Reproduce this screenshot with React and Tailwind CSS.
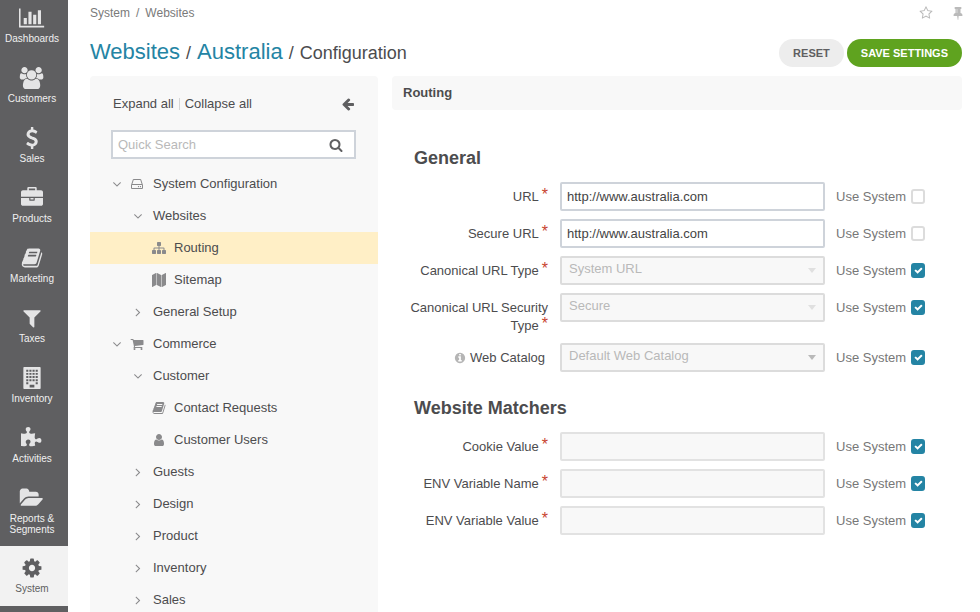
import React from "react";

const ICONS = {
  chart: [2048, "M640 896v512h-256v-512h256zm384-512v1024h-256v-1024h256zm1024 1152v128h-2048v-1536h128v1408h1920zm-640-896v768h-256v-768h256zm384-384v1152h-256v-1152h256z"],
  users: [2048, "M657 896q-162 5-265 128h-134q-82 0-138-40.5t-56-118.5q0-353 124-353 6 0 43.5 21t97.5 42.5 119 21.5q67 0 133-23-5 37-5 66 0 139 81 256zm1071 637q0 120-73 189.5t-194 69.5h-874q-121 0-194-69.5t-73-189.5q0-53 3.5-103.5t14-109 26.5-108.5 43-97.5 62-81 85.5-53.5 111.5-20q10 0 43 21.5t73 48 107 48 135 21.5 135-21.5 107-48 73-48 43-21.5q61 0 111.5 20t85.5 53.5 62 81 43 97.5 26.5 108.5 14 109 3.5 103.5zm-1024-1277q0 106-75 181t-181 75-181-75-75-181 75-181 181-75 181 75 75 181zm704 384q0 159-112.5 271.5t-271.5 112.5-271.5-112.5-112.5-271.5 112.5-271.5 271.5-112.5 271.5 112.5 112.5 271.5zm576 225q0 78-56 118.5t-138 40.5h-134q-103-123-265-128 81-117 81-256 0-29-5-66 66 23 133 23 59 0 119-21.5t97.5-42.5 43.5-21q124 0 124 353zm-128-609q0 106-75 181t-181 75-181-75-75-181 75-181 181-75 181 75 75 181z"],
  dollar: [1792, "M1362 1185q0 153-99.5 263.5t-258.5 136.5v175q0 14-9 23t-23 9h-135q-13 0-22.5-9.5t-9.5-22.5v-175q-66-9-127.5-31t-101.5-44.5-74-48-46.5-37.5-17.5-18q-17-21-2-41l103-135q7-10 23-12 15-2 24 9l2 2q113 99 243 125 37 8 74 8 81 0 142.5-43t61.5-122q0-28-15-53t-33.5-42-58.5-37.5-66-32-80-32.5q-39-16-61.5-25t-61.5-26.5-62.5-31-56.5-35.5-53.5-42.5-43.5-49-35.5-58-21-66.5-8.5-78q0-138 98-242t255-134v-180q0-13 9.5-22.5t22.5-9.5h135q14 0 23 9t9 23v176q57 6 110.5 23t87 33.5 63.5 37.5 39 29 15 14q17 18 5 38l-81 146q-8 15-23 16-14 3-27-7-3-3-14.5-12t-39-26.5-58.5-32-74.5-26-85.5-11.5q-95 0-155 43t-60 111q0 26 8.5 48t29.5 41.5 39.5 33 56 31 60.5 27 70 27.5q53 20 81 31.5t76 35 75.5 42.5 62 50 53 63.5 31.5 76.5 13 94z"],
  briefcase: [1792, "M640 256h512v-128h-512v128zm1152 640v480q0 66-47 113t-113 47h-1472q-66 0-113-47t-47-113v-480h672v160q0 26 19 45t45 19h320q26 0 45-19t19-45v-160h672zm-768 0v128h-256v-128h256zm768-480v384h-1792v-384q0-66 47-113t113-47h352v-160q0-40 28-68t68-28h576q40 0 68 28t28 68v160h352q66 0 113 47t47 113z"],
  book: [1792, "M1703 478q40 57 18 129l-275 906q-19 64-76.5 107.5t-122.5 43.5h-923q-77 0-148.5-53.5t-99.5-131.5q-24-67-2-127 0-4 3-27t4-37q1-8-3-21.5t-3-19.5q2-11 8-21t16.5-23.5 16.5-23.5q23-38 45-91.5t30-91.5q3-10 .5-30t-.5-28q3-11 17-28t17-23q21-36 42-92t25-90q1-9-2.5-32t.5-28q4-13 22-30.5t22-22.5q19-26 42.5-84.5t27.5-96.5q1-8-3-25.5t-2-26.5q2-8 9-18t18-23 17-21q8-12 16.5-30.5t15-35 16-36 19.5-32 26.5-23.5 36-11.5 47.5 5.5l-1 3q38-9 51-9h761q74 0 114 56t18 130l-274 906q-36 119-71.5 153.5t-128.5 34.5h-869q-27 0-38 15-11 16-1 43 24 70 144 70h923q29 0 56-15.5t35-41.5l300-987q7-22 5-57 38 15 59 43zm-1064 2q-4 13 2 22.5t20 9.5h608q13 0 25.5-9.5t16.5-22.5l21-64q4-13-2-22.5t-20-9.5h-608q-13 0-25.5 9.5t-16.5 22.5zm-83 256q-4 13 2 22.5t20 9.5h608q13 0 25.5-9.5t16.5-22.5l21-64q4-13-2-22.5t-20-9.5h-608q-13 0-25.5 9.5t-16.5 22.5z"],
  filter: [1792, "M1595 295q17 41-14 70l-493 493v742q0 42-39 59-13 5-25 5-27 0-45-19l-256-256q-19-19-19-45v-486l-493-493q-31-29-14-70 17-39 59-39h1280q42 0 59 39z"],
  building: [1792, "M192 64q0-64 64-64h1280q64 0 64 64v1664q0 64-64 64h-1280q-64 0-64-64zM427 224h170v160h-170zM683 224h170v160h-170zM939 224h170v160h-170zM1195 224h170v160h-170zM427 480h170v160h-170zM683 480h170v160h-170zM939 480h170v160h-170zM1195 480h170v160h-170zM427 736h170v160h-170zM683 736h170v160h-170zM939 736h170v160h-170zM1195 736h170v160h-170zM427 992h170v160h-170zM683 992h170v160h-170zM939 992h170v160h-170zM1195 992h170v160h-170zM427 1248h170v160h-170zM1195 1248h170v160h-170zM704 1440h384v224h-384z"],
  puzzle: [1792, "M1664 1098q0 81-44.5 135t-123.5 54q-41 0-77.5-17.5t-59-38-56.5-38-71-17.5q-110 0-110 124 0 39 16 115t15 115v5q-22 0-33 1-34 3-97.5 11.5t-115.5 13.5-98 5q-61 0-103-26.5t-42-83.5q0-37 17.5-71t38-56.5 38-59 17.5-77.5q0-79-54-123.5t-135-44.5q-84 0-143 45.5t-59 127.5q0 43 15 83t33.5 64.5 33.5 53 15 50.5q0 45-46 89-37 35-117 35-95 0-245-24-9-2-27.5-4t-27.5-4l-13-2q-1 0-3-1-2 0-2-1v-1024q2 1 17.5 3.5t34 5 21.5 3.5q150 24 245 24 80 0 117-35 46-44 46-89 0-22-15-50.5t-33.5-53-33.5-64.5-15-83q0-82 59-127.5t144-45.5q80 0 134 44.5t54 123.5q0 41-17.5 77.5t-38 59-38 56.5-17.5 71q0 57 42 83.5t103 26.5q64 0 180-15t163-17v2q-1 2-3.5 17.5t-5 34-3.5 21.5q-24 150-24 245 0 80 35 117 44 46 89 46 22 0 50.5-15t53-33.5 64.5-33.5 83-15q82 0 127.5 59t45.5 143z"],
  folder: [2048, "M1943 952q0 31-31 66l-336 396q-43 51-120.5 86.5t-143.5 35.5h-1088q-34 0-60.5-13t-26.5-43q0-31 31-66l336-396q43-51 120.5-86.5t143.5-35.5h1088q34 0 60.5 13t26.5 43zm-343-344v160h-832q-94 0-197 47.5t-164 119.5l-337 396-5 6q0-4-.5-12.5t-.5-12.5v-960q0-92 66-158t158-66h320q92 0 158 66t66 158v32h544q92 0 158 66t66 158z"],
  cog: [1792, "M1152 896q0-106-75-181t-181-75-181 75-75 181 75 181 181 75 181-75 75-181zm512-109v222q0 12-8 23t-20 13l-185 28q-19 54-39 91 35 50 107 138 10 12 10 25t-9 23q-27 37-99 108t-94 71q-12 0-26-9l-138-108q-44 23-91 38-16 136-29 186-7 28-36 28h-222q-14 0-24.5-8.5t-11.5-21.5l-28-184q-49-16-90-37l-141 107q-10 9-25 9-14 0-25-11-126-114-165-168-7-10-7-23 0-12 8-23 15-21 51-66.5t54-70.5q-27-50-41-99l-183-27q-13-2-21-12.5t-8-23.5v-222q0-12 8-23t19-13l186-28q14-46 39-92-40-57-107-138-10-12-10-24 0-10 9-23 26-36 98.5-107.5t94.5-71.5q13 0 26 10l138 107q44-23 91-38 16-136 29-186 7-28 36-28h222q14 0 24.5 8.5t11.5 21.5l28 184q49 16 90 37l142-107q9-9 24-9 13 0 25 10 129 119 165 170 7 8 7 22 0 12-8 23-15 21-51 66.5t-54 70.5q26 50 41 98l183 28q13 2 21 12.5t8 23.5z"],
  star: [1792, "M1201 1004l306-297-422-62-189-382-189 382-422 62 306 297-73 421 378-199 377 199zm527-357q0 22-26 48l-363 354 86 500q1 7 1 20 0 50-41 50-19 0-40-12l-449-236-449 236q-22 12-40 12-21 0-31.5-14.5t-10.5-35.5q0-6 2-20l86-500-364-354q-25-27-25-48 0-37 56-46l502-73 225-455q19-41 49-41t49 41l225 455 502 73q56 9 56 46z"],
  pin: [1792, "M800 864v-448q0-14-9-23t-23-9-23 9-9 23v448q0 14 9 23t23 9 23-9 9-23zm672 352q0 26-19 45t-45 19h-429l-51 483q-2 12-10.5 20.5t-20.5 8.5h-1q-27 0-32-27l-76-485h-404q-26 0-45-19t-19-45q0-123 78.5-221.5t177.5-98.5v-512q-52 0-90-38t-38-90 38-90 90-38h640q52 0 90 38t38 90-38 90-90 38v512q99 0 177.5 98.5t78.5 221.5z"],
  arrowLeft: [1792, "M1664 896v128q0 53-32.5 90.5t-84.5 37.5h-704l293 294q38 36 38 90t-38 90l-75 76q-37 37-90 37-52 0-91-37l-651-652q-37-37-37-90 0-52 37-91l651-650q38-38 91-38 52 0 90 38l75 74q38 38 38 91t-38 91l-293 293h704q52 0 84.5 37.5t32.5 90.5z"],
  search: [1792, "M1216 832q0-185-131.5-316.5t-316.5-131.5-316.5 131.5-131.5 316.5 131.5 316.5 316.5 131.5 316.5-131.5 131.5-316.5zm512 832q0 52-38 90t-90 38q-54 0-90-38l-343-342q-179 124-399 124-143 0-273.5-55.5t-225-150-150-225-55.5-273.5 55.5-273.5 150-225 225-150 273.5-55.5 273.5 55.5 225 150 150 225 55.5 273.5q0 220-124 399l343 343q37 37 37 90z"],
  sitemap: [1792, "M1792 1248v320q0 40-28 68t-68 28h-320q-40 0-68-28t-28-68v-320q0-40 28-68t68-28h96v-192h-512v192h96q40 0 68 28t28 68v320q0 40-28 68t-68 28h-320q-40 0-68-28t-28-68v-320q0-40 28-68t68-28h96v-192h-512v192h96q40 0 68 28t28 68v320q0 40-28 68t-68 28h-320q-40 0-68-28t-28-68v-320q0-40 28-68t68-28h96v-192q0-52 38-90t90-38h512v-192h-96q-40 0-68-28t-28-68v-320q0-40 28-68t68-28h320q40 0 68 28t28 68v320q0 40-28 68t-68 28h-96v192h512q52 0 90 38t38 90v192h96q40 0 68 28t28 68z"],
  map: [1792, "M512 0q13 0 22.5 9.5t9.5 22.5v1472q0 20-17 28l-480 256q-7 4-15 4-13 0-22.5-9.5t-9.5-22.5v-1472q0-20 17-28l480-256q7-4 15-4zm1248 0q13 0 22.5 9.5t9.5 22.5v1472q0 20-17 28l-480 256q-7 4-15 4-13 0-22.5-9.5t-9.5-22.5v-1472q0-20 17-28l480-256q7-4 15-4zm-1120 0q8 0 14 3l512 256q18 10 18 29v1472q0 13-9.5 22.5t-22.5 9.5q-8 0-14-3l-512-256q-18-10-18-29v-1472q0-13 9.5-22.5t22.5-9.5z"],
  cart: [1792, "M704 1536q0 52-38 90t-90 38-90-38-38-90 38-90 90-38 90 38 38 90zm896 0q0 52-38 90t-90 38-90-38-38-90 38-90 90-38 90 38 38 90zm128-1088v512q0 24-16.5 42.5t-40.5 21.5l-1044 122q13 60 13 70 0 16-24 64h920q26 0 45 19t19 45-19 45-45 19h-1024q-26 0-45-19t-19-45q0-11 8-31.5t16-36 21.5-40 15.5-29.5l-177-823h-204q-26 0-45-19t-19-45 19-45 45-19h256q16 0 28.5 6.5t19.5 15.5 13 24.5 8 26 5.5 29.5 4.5 26h1201q26 0 45 19t19 45z"],
  user: [1792, "M1536 1399q0 109-62.5 187t-150.5 78h-854q-88 0-150.5-78t-62.5-187q0-85 8.5-160.5t31.5-152 58.5-131 94-89 134.5-34.5q131 128 313 128t313-128q76 0 134.5 34.5t94 89 58.5 131 31.5 152 8.5 160.5zm-256-887q0 159-112.5 271.5t-271.5 112.5-271.5-112.5-112.5-271.5 112.5-271.5 271.5-112.5 271.5 112.5 112.5 271.5z"],
  info: [1792, "M1152 1376v-160q0-14-9-23t-23-9h-96v-512q0-14-9-23t-23-9h-320q-14 0-23 9t-9 23v160q0 14 9 23t23 9h96v320h-96q-14 0-23 9t-9 23v160q0 14 9 23t23 9h448q14 0 23-9t9-23zm-128-896v-160q0-14-9-23t-23-9h-192q-14 0-23 9t-9 23v160q0 14 9 23t23 9h192q14 0 23-9t9-23zm640 416q0 209-103 385.5t-279.5 279.5-385.5 103-385.5-103-279.5-279.5-103-385.5 103-385.5 279.5-279.5 385.5-103 385.5 103 279.5 279.5 103 385.5z"],
  angleDown: [1792, "M1395 736q0 13-10 23l-466 466q-10 10-23 10t-23-10l-466-466q-10-10-10-23t10-23l50-50q10-10 23-10t23 10l393 393 393-393q10-10 23-10t23 10l50 50q10 10 10 23z"],
  angleRight: [1792, "M1171 960q0 13-10 23l-466 466q-10 10-23 10t-23-10l-50-50q-10-10-10-23t10-23l393-393-393-393q-10-10-10-23t10-23l50-50q10-10 23-10t23 10l466 466q10 10 10 23z"],
  hdd: [1792, "M1168 1216q0 33-23.5 56.5t-56.5 23.5-56.5-23.5-23.5-56.5 23.5-56.5 56.5-23.5 56.5 23.5 23.5 56.5zm256 0q0 33-23.5 56.5t-56.5 23.5-56.5-23.5-23.5-56.5 23.5-56.5 56.5-23.5 56.5 23.5 23.5 56.5zm112 160v-320q0-13-9.5-22.5t-22.5-9.5h-1216q-13 0-22.5 9.5t-9.5 22.5v320q0 13 9.5 22.5t22.5 9.5h1216q13 0 22.5-9.5t9.5-22.5zm-1230-480h1180l-157-482q-4-13-16-21.5t-26-8.5h-782q-14 0-26 8.5t-16 21.5zm1358 160v320q0 66-47 113t-113 47h-1216q-66 0-113-47t-47-113v-320q0-25 16-75l197-606q17-53 63-86t101-33h782q55 0 101 33t63 86l197 606q16 50 16 75z"],
  check: [1792, "M1671 566q0 40-28 68l-724 724-136 136q-28 28-68 28t-68-28l-136-136-362-362q-28-28-28-68t28-68l136-136q28-28 68-28t68 28l294 295 656-657q28-28 68-28t68 28l136 136q28 28 28 68z"],
};

function Icon({ name, className }) {
  const [width, d] = ICONS[name];
  return (
    <svg viewBox={`0 0 ${width} 1792`} className={className} fill="currentColor" fillRule={name === "building" ? "evenodd" : "nonzero"} aria-hidden="true">
      <path d={d} />
    </svg>
  );
}

const MENU = [
  ["chart", "Dashboards"],
  ["users", "Customers"],
  ["dollar", "Sales"],
  ["briefcase", "Products"],
  ["book", "Marketing"],
  ["filter", "Taxes"],
  ["building", "Inventory"],
  ["puzzle", "Activities"],
  ["folder", "Reports & Segments"],
  ["cog", "System"],
];

const TREE = [
  { level: 0, open: true, icon: "hdd", text: "System Configuration" },
  { level: 1, open: true, text: "Websites" },
  { level: 2, icon: "sitemap", text: "Routing", active: true },
  { level: 2, icon: "map", text: "Sitemap" },
  { level: 1, open: false, text: "General Setup" },
  { level: 0, open: true, icon: "cart", text: "Commerce" },
  { level: 1, open: true, text: "Customer" },
  { level: 2, icon: "book", text: "Contact Requests" },
  { level: 2, icon: "user", text: "Customer Users" },
  { level: 1, open: false, text: "Guests" },
  { level: 1, open: false, text: "Design" },
  { level: 1, open: false, text: "Product" },
  { level: 1, open: false, text: "Inventory" },
  { level: 1, open: false, text: "Sales" },
];

const INDENT = ["pl-5", "pl-[41px]", "pl-[62px]"];

const GENERAL = [
  { id: "url", label: "URL", required: true, value: "http://www.australia.com" },
  { id: "secure-url", label: "Secure URL", required: true, value: "http://www.australia.com" },
  { id: "canonical-type", label: "Canonical URL Type", required: true, select: "System URL", system: true },
  { id: "canonical-security", label: "Canonical URL Security Type", required: true, select: "Secure", system: true },
  { id: "web-catalog", label: "Web Catalog", hint: true, select: "Default Web Catalog", strongCaret: true, system: true },
];

const MATCHERS = [
  { id: "cookie", label: "Cookie Value", required: true, value: "", system: true },
  { id: "env-name", label: "ENV Variable Name", required: true, value: "", system: true },
  { id: "env-value", label: "ENV Variable Value", required: true, value: "", system: true },
];

function Sidebar() {
  return (
    <nav className="-mt-1 w-[68px] shrink-0 bg-[#5f5f61]">
      {MENU.map(([icon, text]) => {
        const active = text === "System";
        return (
          <a
            key={text}
            href="#"
            className={`flex min-h-[60px] flex-col items-center gap-1 pt-[11px] pr-1 pb-[11px] text-center text-[10px] leading-[11px] ${
              active ? "bg-[#f2f2f2] text-[#5f5f61]" : "text-[#f0f0f0]"
            }`}
          >
            <Icon name={icon} className={`h-[22px] ${active ? "" : "text-[#e4e4e5]"}`} />
            <span className={icon === "folder" ? "w-12" : ""}>{text}</span>
          </a>
        );
      })}
    </nav>
  );
}

function TreePanel() {
  return (
    <aside className="w-[288px] shrink-0 overflow-hidden rounded-t bg-[#f8f8f8]">
      <div className="flex items-center pt-[19px] pr-[23px] pl-[23px]">
        <button type="button">Expand all</button>
        <span className="mx-[5px] h-3 w-px bg-[#d5d5d5]" />
        <button type="button">Collapse all</button>
        <button type="button" aria-label="Collapse panel" className="ml-auto text-[#5f5f61]">
          <Icon name="arrowLeft" className="size-[14px]" />
        </button>
      </div>
      <div className="mt-[17px] mr-[22px] mb-[9px] ml-[21px] flex h-[29px] items-center border-2 border-[#ced3da] bg-white pr-[11px]">
        <input
          type="text"
          aria-label="Quick Search"
          placeholder="Quick Search"
          className="min-w-0 flex-1 bg-transparent pl-[5px] outline-none placeholder:text-[#b9b9b9]"
        />
        <button type="button" aria-label="Search">
          <Icon name="search" className="size-[14px] text-[#5f5f61]" />
        </button>
      </div>
      <ul>
        {TREE.map((node) => (
          <li key={node.text}>
            <a href="#" className={`flex h-8 items-center ${INDENT[node.level]} ${node.active ? "bg-[#ffefc6]" : ""}`}>
              {node.open !== undefined && (
                <Icon name={node.open ? "angleDown" : "angleRight"} className={`size-[14px] text-[#8a8a8c] ${node.icon ? "mr-[6px]" : "mr-2"}`} />
              )}
              {node.icon && <Icon name={node.icon} className={`size-[14px] text-[#8a8a8c] ${node.level === 2 ? "mr-2" : "mr-[9px]"}`} />}
              {node.text}
            </a>
          </li>
        ))}
      </ul>
    </aside>
  );
}

function Field({ field }) {
  const { id, label, required, hint, value, select, strongCaret, system } = field;
  return (
    <div className="flex items-start">
      <label htmlFor={id} className="w-[140px] shrink-0 pt-[6px] text-right leading-[18px]">
        {hint && <Icon name="info" className="mr-1 inline-block size-3 align-[-2px] text-[#b5b5b5]" />}
        <span className={required ? "" : "pr-[3px]"}>{label}</span>
        {required && <span className="relative -top-px pl-[3px] text-base leading-none text-[#c8452f]">*</span>}
      </label>
      <div className="relative ml-3 w-[265px] shrink-0">
        {select ? (
          <>
            <select
              id={id}
              disabled
              className="block h-[29px] w-full appearance-none rounded-[2px] border-2 border-[#dcdcdc] bg-[#f8f8f8] pr-6 pb-1 pl-[7px] text-[#b9b9b9] opacity-100"
            >
              <option>{select}</option>
            </select>
            <span
              className={`pointer-events-none absolute top-3 right-[9px] border-x-4 border-t-5 border-x-transparent ${
                strongCaret ? "border-t-[#b9b9b9]" : "border-t-[#e0e0e0]"
              }`}
            />
          </>
        ) : (
          <input
            id={id}
            type="text"
            defaultValue={value}
            disabled={system}
            className="block h-[29px] w-full rounded-[2px] border-2 border-[#ced3da] bg-white px-[5px] text-[#444] outline-none disabled:border-[#e2e2e2] disabled:bg-[#f8f8f8]"
          />
        )}
      </div>
      <label className="ml-[11px] flex h-[29px] items-center text-[#777]">
        <span className="w-[75px] whitespace-nowrap">Use System</span>
        <span className="relative flex">
          <input
            type="checkbox"
            defaultChecked={system}
            className="peer h-[15px] w-[14px] appearance-none rounded-[3px] border-2 border-[#dcdcdc] bg-white checked:border-[#2484a4] checked:bg-[#2484a4]"
          />
          <Icon name="check" className="pointer-events-none absolute inset-0 m-auto hidden size-[9px] text-white peer-checked:block" />
        </span>
      </label>
    </div>
  );
}

function Section({ title, fields }) {
  return (
    <section>
      <h2 className="pl-[6px] text-lg leading-6 font-bold text-[#4c4c4e]">{title}</h2>
      <div className="mt-3 flex flex-col gap-2">
        {fields.map((field) => (
          <Field key={field.id} field={field} />
        ))}
      </div>
    </section>
  );
}

export default function App() {
  return (
    <div className="flex h-screen overflow-hidden bg-white font-['Liberation_Sans',Arial,sans-serif] text-[13px] leading-[18px] text-[#4c4c4e]">
      <Sidebar />
      <main className="flex min-w-0 flex-1 flex-col pr-[18px] pl-[22px]">
        <div className="flex h-[26px] items-center justify-between">
          <div className="flex gap-[6px] text-xs text-[#7a7a7a]">
            <a href="#">System</a>
            <span>/</span>
            <a href="#">Websites</a>
          </div>
          <div className="flex gap-[18px] text-[#bababa]">
            <button type="button" aria-label="Add to favorites">
              <Icon name="star" className="size-[14px]" />
            </button>
            <button type="button" aria-label="Pin" className="-mr-[3px]">
              <Icon name="pin" className="size-[14px]" />
            </button>
          </div>
        </div>
        <header className="mb-2 flex items-center justify-between pt-3">
          <h1 className="flex items-baseline gap-[6px] text-lg leading-7">
            <a href="#" className="text-[22px] text-[#2484a4]">Websites</a>
            <span>/</span>
            <a href="#" className="text-[22px] text-[#2484a4]">Australia</a>
            <span>/</span>
            <span>Configuration</span>
          </h1>
          <div className="flex gap-[3px] text-[11px] font-bold">
            <button type="button" className="h-7 rounded-full bg-[#ededed] px-[14px] text-[#5f5f61]">RESET</button>
            <button type="button" className="h-7 rounded-full bg-[#5fa31f] px-[14px] text-white">SAVE SETTINGS</button>
          </div>
        </header>
        <div className="flex min-h-0 flex-1 gap-[14px] pt-px">
          <TreePanel />
          <div className="min-w-0 flex-1">
            <div className="h-[34px] rounded bg-[#f8f8f8] pt-2 pl-[11px] font-bold">Routing</div>
            <form className="flex flex-col gap-6 pt-9 pl-4">
              <Section title="General" fields={GENERAL} />
              <Section title="Website Matchers" fields={MATCHERS} />
            </form>
          </div>
        </div>
      </main>
    </div>
  );
}
